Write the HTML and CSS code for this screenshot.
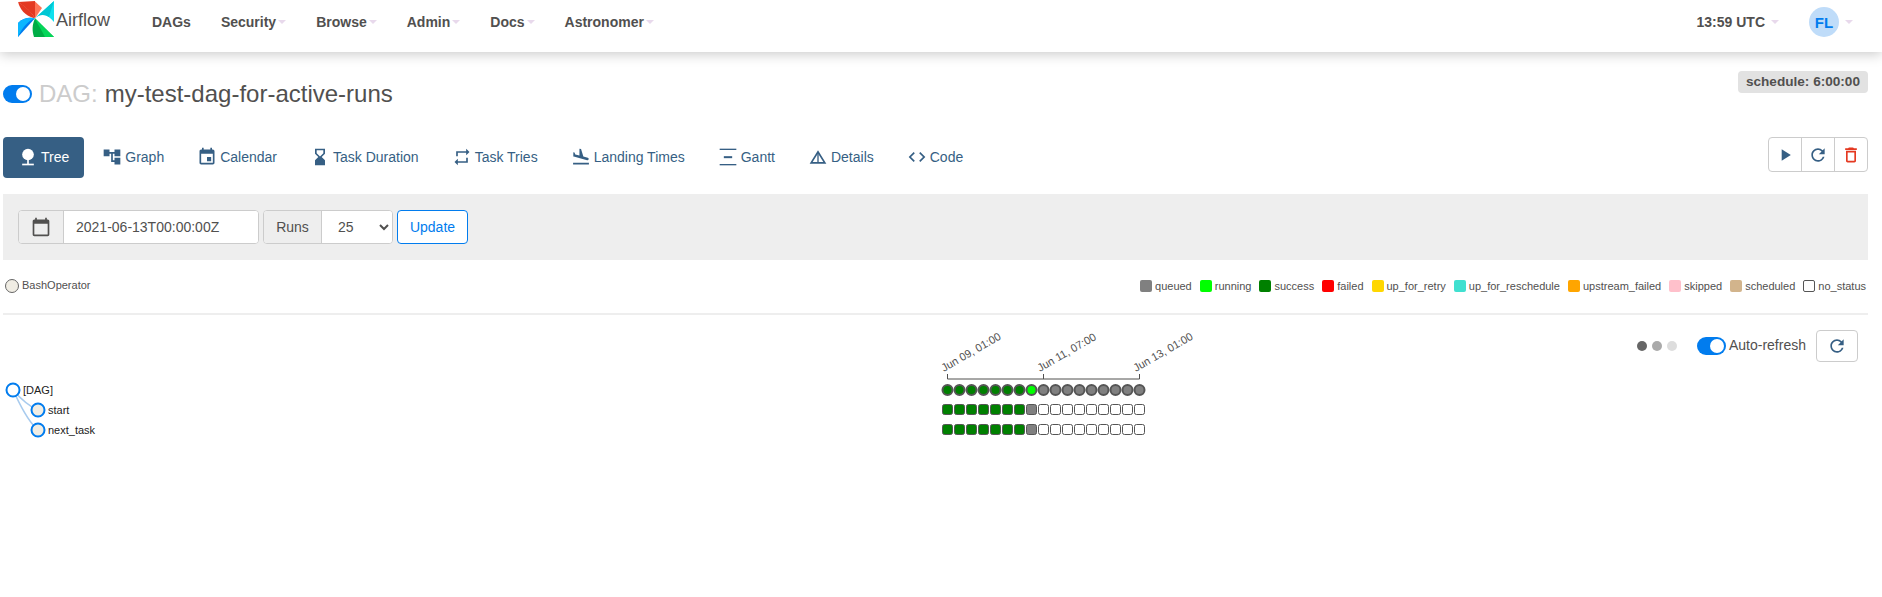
FILE: index.html
```html
<!DOCTYPE html>
<html lang="en">
<head>
<meta charset="utf-8">
<title>Airflow - my-test-dag-for-active-runs</title>
<link rel="stylesheet" href="styles.css">
</head>
<body>
<nav class="navbar">
  <a class="brand">
    <svg class="logo" viewBox="0 0 36 36" width="36" height="36">
      <path fill="#e43921" d="M0 1L17 0V17.3C14 12 8 6 0 1z"/>
      <path fill="#e43921" d="M0 1C3 12 11 16 17 17.3C13 10 7 5 0 1z"/>
      <path fill="#ff7557" d="M17 .5L24 7L17 17.3z"/>
      <path fill="#11e1ee" d="M36 0L17 17.3C24 11 30 14 36 21z"/>
      <path fill="#00c7d4" d="M36 0L17 17.3C21 13 27 13 31 16z"/>
      <path fill="#00ad46" d="M36 36L17 17.3C14 24 14 30 16 36z"/>
      <path fill="#04d659" d="M36 36L17 17.3C20 24 24 30 27 36z"/>
      <path fill="#017cee" d="M0 36V22C5 17 11 16 17 17.3z"/>
      <path fill="#0cb6ff" d="M0 22C5 17 11 16 17 17.3C10 20 4 27 0 36z"/>
    </svg>
    <span class="brand-name">Airflow</span>
  </a>
  <ul class="nav-list">
    <li class="nav-item">DAGs</li>
    <li class="nav-item">Security<i class="caret"></i></li>
    <li class="nav-item">Browse<i class="caret"></i></li>
    <li class="nav-item">Admin<i class="caret"></i></li>
    <li class="nav-item">Docs<i class="caret"></i></li>
    <li class="nav-item">Astronomer<i class="caret"></i></li>
  </ul>
  <div class="nav-right">
    <span class="clock">13:59 UTC<i class="caret caret-wide"></i></span>
    <span class="avatar">FL</span><i class="caret caret-user"></i>
  </div>
</nav>

<main class="page">
  <header class="title-row">
    <h1 class="title"><span class="switch"><span class="thumb"></span></span><span class="dag-label">DAG:</span><span class="dag-name">my-test-dag-for-active-runs</span></h1>
    <span class="badge">schedule: 6:00:00</span>
  </header>

  <div class="tabs-row">
    <ul class="tabs">
      <li class="tab active">
        <svg class="icon" viewBox="0 0 24 24"><circle cx="12" cy="9" r="7"/><rect x="11" y="15" width="2" height="6"/><rect x="5" y="20" width="14" height="2"/></svg>Tree</li>
      <li class="tab"><svg class="icon" viewBox="0 0 24 24"><path d="M22 11V3h-7v3H9V3H2v8h7V8h2v10h4v3h7v-8h-7v3h-2V8h2v3z"/></svg>Graph</li>
      <li class="tab"><svg class="icon" viewBox="0 0 24 24"><path d="M17 12h-5v5h5v-5zM16 1v2H8V1H6v2H5c-1.11 0-1.99.9-1.99 2L3 19c0 1.1.89 2 2 2h14c1.1 0 2-.9 2-2V5c0-1.1-.9-2-2-2h-1V1h-2zm3 18H5V8h14v11z"/></svg>Calendar</li>
      <li class="tab"><svg class="icon" viewBox="0 0 24 24"><path d="M18 22l-.01-6L14 12l3.99-4.01L18 2H6v6l4 4-4 3.99V22h12zM8 7.5V4h8v3.5l-4 4-4-4z"/></svg>Task Duration</li>
      <li class="tab"><svg class="icon" viewBox="0 0 24 24"><path d="M7 7h10v3l4-4-4-4v3H5v6h2V7zm10 10H7v-3l-4 4 4 4v-3h12v-6h-2v4z"/></svg>Task Tries</li>
      <li class="tab"><svg class="icon" viewBox="0 0 24 24"><path d="M2.5 19h19v2h-19zm7.18-5.73l4.35 1.16 5.31 1.42c.8.21 1.62-.26 1.84-1.06.21-.8-.26-1.62-1.06-1.84l-5.31-1.42-2.76-9.02L10.12 2v8.28L5.15 8.95l-.93-2.32-1.45-.39v5.17l1.6.43 5.31 1.43z"/></svg>Landing Times</li>
      <li class="tab"><svg class="icon" viewBox="0 0 24 24"><rect x="2" y="2" width="20" height="1.6"/><rect x="2" y="20.4" width="20" height="1.6"/><rect x="7" y="11" width="10" height="2.4"/></svg>Gantt</li>
      <li class="tab"><svg class="icon" viewBox="0 0 24 24"><path d="M12 7.77L18.39 18H5.61L12 7.77M12 4L2 20h20L12 4z"/><rect x="11.2" y="6" width="1.6" height="13"/></svg>Details</li>
      <li class="tab"><svg class="icon" viewBox="0 0 24 24"><path d="M9.4 16.6L4.8 12l4.6-4.6L8 6l-6 6 6 6 1.4-1.4zm5.2 0l4.6-4.6-4.6-4.6L16 6l6 6-6 6-1.4-1.4z"/></svg>Code</li>
    </ul>
    <div class="actions">
      <button class="action"><svg class="icon" viewBox="0 0 24 24"><path d="M8 5v14l11-7z"/></svg></button>
      <button class="action"><svg class="icon" viewBox="0 0 24 24"><path d="M17.65 6.35A7.958 7.958 0 0012 4c-4.42 0-7.99 3.58-7.99 8s3.57 8 7.99 8c3.73 0 6.84-2.55 7.73-6h-2.08A5.99 5.99 0 0112 18c-3.31 0-6-2.69-6-6s2.69-6 6-6c1.66 0 3.14.69 4.22 1.78L13 11h7V4l-2.35 2.35z"/></svg></button>
      <button class="action danger"><svg class="icon" viewBox="0 0 24 24"><path d="M6 19c0 1.1.9 2 2 2h8c1.1 0 2-.9 2-2V7H6v12zM8 9h8v10H8V9zm7.5-5l-1-1h-5l-1 1H5v2h14V4h-3.5z"/></svg></button>
    </div>
  </div>

  <form class="filter">
    <div class="group date-group">
      <span class="addon cal"><svg class="icon" viewBox="0 0 24 24"><path d="M20 3h-1V1h-2v2H7V1H5v2H4c-1.1 0-2 .9-2 2v16c0 1.1.9 2 2 2h16c1.1 0 2-.9 2-2V5c0-1.1-.9-2-2-2zm0 18H4V8h16v13z"/></svg></span>
      <input class="date-input" type="text" value="2021-06-13T00:00:00Z">
    </div>
    <div class="group runs-group">
      <span class="addon runs">Runs</span>
      <select class="runs-select"><option>25</option></select>
    </div>
    <button class="update" type="button">Update</button>
  </form>

  <div class="legend-row">
    <div class="op"><span class="op-dot"></span>BashOperator</div>
    <ul class="legend">
      <li class="legend-item"><i class="sw s-queued"></i>queued</li>
      <li class="legend-item"><i class="sw s-running"></i>running</li>
      <li class="legend-item"><i class="sw s-success"></i>success</li>
      <li class="legend-item"><i class="sw s-failed"></i>failed</li>
      <li class="legend-item"><i class="sw s-retry"></i>up_for_retry</li>
      <li class="legend-item"><i class="sw s-resched"></i>up_for_reschedule</li>
      <li class="legend-item"><i class="sw s-upstream"></i>upstream_failed</li>
      <li class="legend-item"><i class="sw s-skipped"></i>skipped</li>
      <li class="legend-item"><i class="sw s-scheduled"></i>scheduled</li>
      <li class="legend-item"><i class="sw s-none"></i>no_status</li>
    </ul>
  </div>

  <hr class="rule">

  <section class="canvas">
    <div class="refresh">
      <span class="dots"><i class="dot d1"></i><i class="dot d2"></i><i class="dot d3"></i></span>
      <span class="switch"><span class="thumb"></span></span>
      <span class="refresh-label">Auto-refresh</span>
      <button class="refresh-btn"><svg class="icon" viewBox="0 0 24 24"><path d="M17.65 6.35A7.958 7.958 0 0012 4c-4.42 0-7.99 3.58-7.99 8s3.57 8 7.99 8c3.73 0 6.84-2.55 7.73-6h-2.08A5.99 5.99 0 0112 18c-3.31 0-6-2.69-6-6s2.69-6 6-6c1.66 0 3.14.69 4.22 1.78L13 11h7V4l-2.35 2.35z"/></svg></button>
    </div>
    <svg class="tree" viewBox="3 315 1220 130" width="1220" height="130">
      <path class="link" d="M13 390C20 398 28 406 38 410M13 390C18 400 26 420 38 430"/>
      <circle class="node root" cx="13" cy="390" r="6.5"/>
      <circle class="node" cx="38" cy="410" r="6.5"/>
      <circle class="node" cx="38" cy="430" r="6.5"/>
      <text class="label" x="23" y="394">[DAG]</text>
      <text class="label" x="48" y="414">start</text>
      <text class="label" x="48" y="434">next_task</text>

      <text class="tick" transform="translate(944 372) rotate(-30)">Jun 09, 01:00</text>
      <text class="tick" transform="translate(1040 372) rotate(-30)">Jun 11, 07:00</text>
      <text class="tick" transform="translate(1136 372) rotate(-30)">Jun 13, 01:00</text>
      <path class="axis" d="M947.5 374V379H1139.5V374M1043.5 374V379"/>

      <g class="dagruns">
        <circle class="success" cx="947.5" cy="390" r="5"/><circle class="success" cx="959.5" cy="390" r="5"/><circle class="success" cx="971.5" cy="390" r="5"/><circle class="success" cx="983.5" cy="390" r="5"/><circle class="success" cx="995.5" cy="390" r="5"/><circle class="success" cx="1007.5" cy="390" r="5"/><circle class="success" cx="1019.5" cy="390" r="5"/><circle class="running" cx="1031.5" cy="390" r="5"/><circle class="queued" cx="1043.5" cy="390" r="5"/><circle class="queued" cx="1055.5" cy="390" r="5"/><circle class="queued" cx="1067.5" cy="390" r="5"/><circle class="queued" cx="1079.5" cy="390" r="5"/><circle class="queued" cx="1091.5" cy="390" r="5"/><circle class="queued" cx="1103.5" cy="390" r="5"/><circle class="queued" cx="1115.5" cy="390" r="5"/><circle class="queued" cx="1127.5" cy="390" r="5"/><circle class="queued" cx="1139.5" cy="390" r="5"/>
      </g>
      <g class="cells">
        <rect class="success" x="942.5" y="404.5" width="10" height="10"/><rect class="success" x="954.5" y="404.5" width="10" height="10"/><rect class="success" x="966.5" y="404.5" width="10" height="10"/><rect class="success" x="978.5" y="404.5" width="10" height="10"/><rect class="success" x="990.5" y="404.5" width="10" height="10"/><rect class="success" x="1002.5" y="404.5" width="10" height="10"/><rect class="success" x="1014.5" y="404.5" width="10" height="10"/><rect class="queued" x="1026.5" y="404.5" width="10" height="10"/><rect x="1038.5" y="404.5" width="10" height="10"/><rect x="1050.5" y="404.5" width="10" height="10"/><rect x="1062.5" y="404.5" width="10" height="10"/><rect x="1074.5" y="404.5" width="10" height="10"/><rect x="1086.5" y="404.5" width="10" height="10"/><rect x="1098.5" y="404.5" width="10" height="10"/><rect x="1110.5" y="404.5" width="10" height="10"/><rect x="1122.5" y="404.5" width="10" height="10"/><rect x="1134.5" y="404.5" width="10" height="10"/>
        <rect class="success" x="942.5" y="424.5" width="10" height="10"/><rect class="success" x="954.5" y="424.5" width="10" height="10"/><rect class="success" x="966.5" y="424.5" width="10" height="10"/><rect class="success" x="978.5" y="424.5" width="10" height="10"/><rect class="success" x="990.5" y="424.5" width="10" height="10"/><rect class="success" x="1002.5" y="424.5" width="10" height="10"/><rect class="success" x="1014.5" y="424.5" width="10" height="10"/><rect class="queued" x="1026.5" y="424.5" width="10" height="10"/><rect x="1038.5" y="424.5" width="10" height="10"/><rect x="1050.5" y="424.5" width="10" height="10"/><rect x="1062.5" y="424.5" width="10" height="10"/><rect x="1074.5" y="424.5" width="10" height="10"/><rect x="1086.5" y="424.5" width="10" height="10"/><rect x="1098.5" y="424.5" width="10" height="10"/><rect x="1110.5" y="424.5" width="10" height="10"/><rect x="1122.5" y="424.5" width="10" height="10"/><rect x="1134.5" y="424.5" width="10" height="10"/>
      </g>
    </svg>
  </section>
</main>
</body>
</html>
```

FILE: styles.css
```css
* { box-sizing: border-box; }
html, body { margin: 0; padding: 0; }
body {
  font-family: "Liberation Sans", Arial, sans-serif;
  font-size: 14px;
  color: #51504f;
  background: #fff;
}
ul { list-style: none; margin: 0; padding: 0; }
i { display: inline-block; font-style: normal; }

/* navbar */
.navbar {
  display: flex;
  align-items: flex-start;
  height: 52px;
  padding: 0 14px 0 18px;
  background: #fff;
  box-shadow: 0 2px 12px rgba(0, 0, 0, .22);
}
.brand { display: flex; align-items: flex-start; width: 134px; flex: none; }
.logo { margin-top: 1px; flex: none; }
.brand-name { margin: 10px 0 0 2px; font-size: 18px; line-height: 20px; color: #51504f; }
.nav-list { display: flex; gap: 30px; height: 44px; align-items: center; font-weight: 700; }
.nav-item { display: flex; align-items: center; }
.caret {
  width: 0;
  height: 0;
  margin-left: 2px;
  border-left: 4px solid transparent;
  border-right: 4px solid transparent;
  border-top: 4px solid #e8d9ec;
}
.nav-right { display: flex; align-items: center; height: 44px; margin-left: auto; font-weight: 700; }
.clock { display: flex; align-items: center; }
.caret-wide { margin-left: 6px; }
.avatar {
  display: flex;
  align-items: center;
  justify-content: center;
  width: 30px;
  height: 30px;
  margin-left: 30px;
  border-radius: 50%;
  background: #bfdcf9;
  color: #017cee;
  font-size: 15px;
}
.caret-user { margin: 0 15px 0 6px; }

/* page */
.page { padding: 0 14px 0 3px; }
.title-row { display: flex; justify-content: space-between; align-items: flex-start; padding-top: 19px; }
.title { display: flex; align-items: center; margin: 9px 0 1px; font-size: 24px; line-height: 28px; font-weight: 400; }
.dag-label { margin: 0 7px 0 7px; color: #ccc; }
.dag-name { color: #51504f; }
.badge {
  height: 22px;
  padding: 0 8px;
  border-radius: 4px;
  background: #e2e2e2;
  font-size: 13.6px;
  font-weight: 700;
  line-height: 22px;
  color: #51504f;
}
.switch {
  display: inline-flex;
  justify-content: flex-end;
  align-items: center;
  width: 29px;
  height: 18px;
  padding: 2px;
  border-radius: 9px;
  background: #017cee;
  flex: none;
}
.thumb { width: 14px; height: 14px; border-radius: 50%; background: #fff; }

/* tabs */
.tabs-row { display: flex; justify-content: space-between; align-items: flex-start; margin-top: 28px; }
.tabs { display: flex; gap: 3px; }
.tab {
  display: flex;
  align-items: center;
  gap: 3px;
  height: 41px;
  padding: 0 15px 2px;
  border-radius: 4px;
  color: #365f84;
}
.tab.active { background: #365f84; color: #fff; }
.icon { width: 20px; height: 20px; fill: currentColor; flex: none; }
.actions { display: flex; width: 100px; height: 35px; border: 1px solid #ccc; border-radius: 4px; }
.action {
  display: flex;
  flex: 1;
  align-items: center;
  justify-content: center;
  padding: 0;
  border: 0;
  border-right: 1px solid #ccc;
  background: none;
  color: #365f84;
}
.action:last-child { border-right: 0; }
.action.danger { color: #e43921; }

/* filter */
.filter {
  display: flex;
  align-items: center;
  gap: 4px;
  height: 66px;
  margin-top: 16px;
  padding: 0 15px;
  background: #eee;
}
.group { display: flex; height: 34px; border: 1px solid #ccc; border-radius: 4px; background: #fff; overflow: hidden; }
.date-group { width: 241px; }
.runs-group { width: 130px; }
.addon { display: flex; align-items: center; justify-content: center; background: #eee; border-right: 1px solid #ccc; flex: none; }
.cal { width: 45px; }
.runs { width: 58px; }
.date-input {
  flex: 1;
  min-width: 0;
  padding: 0 12px;
  border: 0;
  outline: 0;
  font: inherit;
  color: #51504f;
}
.runs-select {
  flex: 1;
  min-width: 0;
  padding: 0 12px;
  border: 0;
  outline: 0;
  background: #fff;
  font: inherit;
  color: #51504f;
}
.update {
  width: 71px;
  height: 34px;
  padding: 0;
  border: 1px solid #017cee;
  border-radius: 4px;
  background: #fff;
  font: inherit;
  color: #017cee;
}

/* legend */
.legend-row { display: flex; justify-content: space-between; align-items: flex-start; height: 16px; margin-top: 18px; padding-right: 2px; font-size: 11px; line-height: 14px; }
.op { display: flex; align-items: flex-start; gap: 3px; margin-left: 2px; }
.op-dot { width: 14px; height: 14px; margin-top: 1px; border: 1px solid #666; border-radius: 50%; background: #f0ede4; }
.legend { display: flex; gap: 8px; margin-top: 1px; }
.legend-item { display: flex; align-items: center; gap: 3px; }
.sw { width: 12px; height: 12px; border-radius: 2px; }
.s-queued { background: #808080; }
.s-running { background: #0f0; }
.s-success { background: #008000; }
.s-failed { background: #f00; }
.s-retry { background: #ffd700; }
.s-resched { background: #40e0d0; }
.s-upstream { background: #ffa500; }
.s-skipped { background: #ffc0cb; }
.s-scheduled { background: #d2b48c; }
.s-none { background: #fff; border: 1px solid #555; }
.rule { height: 2px; margin: 19px 0 0; border: 0; background: #eee; }

/* tree canvas */
.canvas { position: relative; height: 130px; }
.tree { display: block; }
.refresh { position: absolute; top: 15px; right: 10px; display: flex; align-items: center; height: 32px; }
.dots { display: flex; gap: 5px; margin-right: 20px; }
.dot { width: 10px; height: 10px; border-radius: 50%; }
.d1 { background: #666; }
.d2 { background: #aaa; }
.d3 { background: #ddd; }
.refresh-label { margin: 0 0 2px 3px; }
.refresh-btn {
  display: flex;
  align-items: center;
  justify-content: center;
  width: 42px;
  height: 32px;
  margin-left: 10px;
  padding: 0;
  border: 1px solid #ccc;
  border-radius: 4px;
  background: #fff;
  color: #365f84;
}
.link { fill: none; stroke: #a8cbee; stroke-width: 1.5; }
.node { fill: #f0ede4; stroke: #017cee; stroke-width: 2; }
.node.root { fill: #fff; }
.label { font-size: 11px; fill: #222; }
.tick { font-size: 11px; fill: #51504f; }
.axis { fill: none; stroke: #51504f; stroke-width: 1; }
.dagruns circle { stroke: #555; stroke-width: 2; }
.cells rect { fill: #fff; stroke: #555; stroke-width: 1; rx: 2px; }
.dagruns .success, .cells .success { fill: #008000; }
.dagruns .running { fill: #0f0; }
.dagruns .queued, .cells .queued { fill: #808080; }
```
